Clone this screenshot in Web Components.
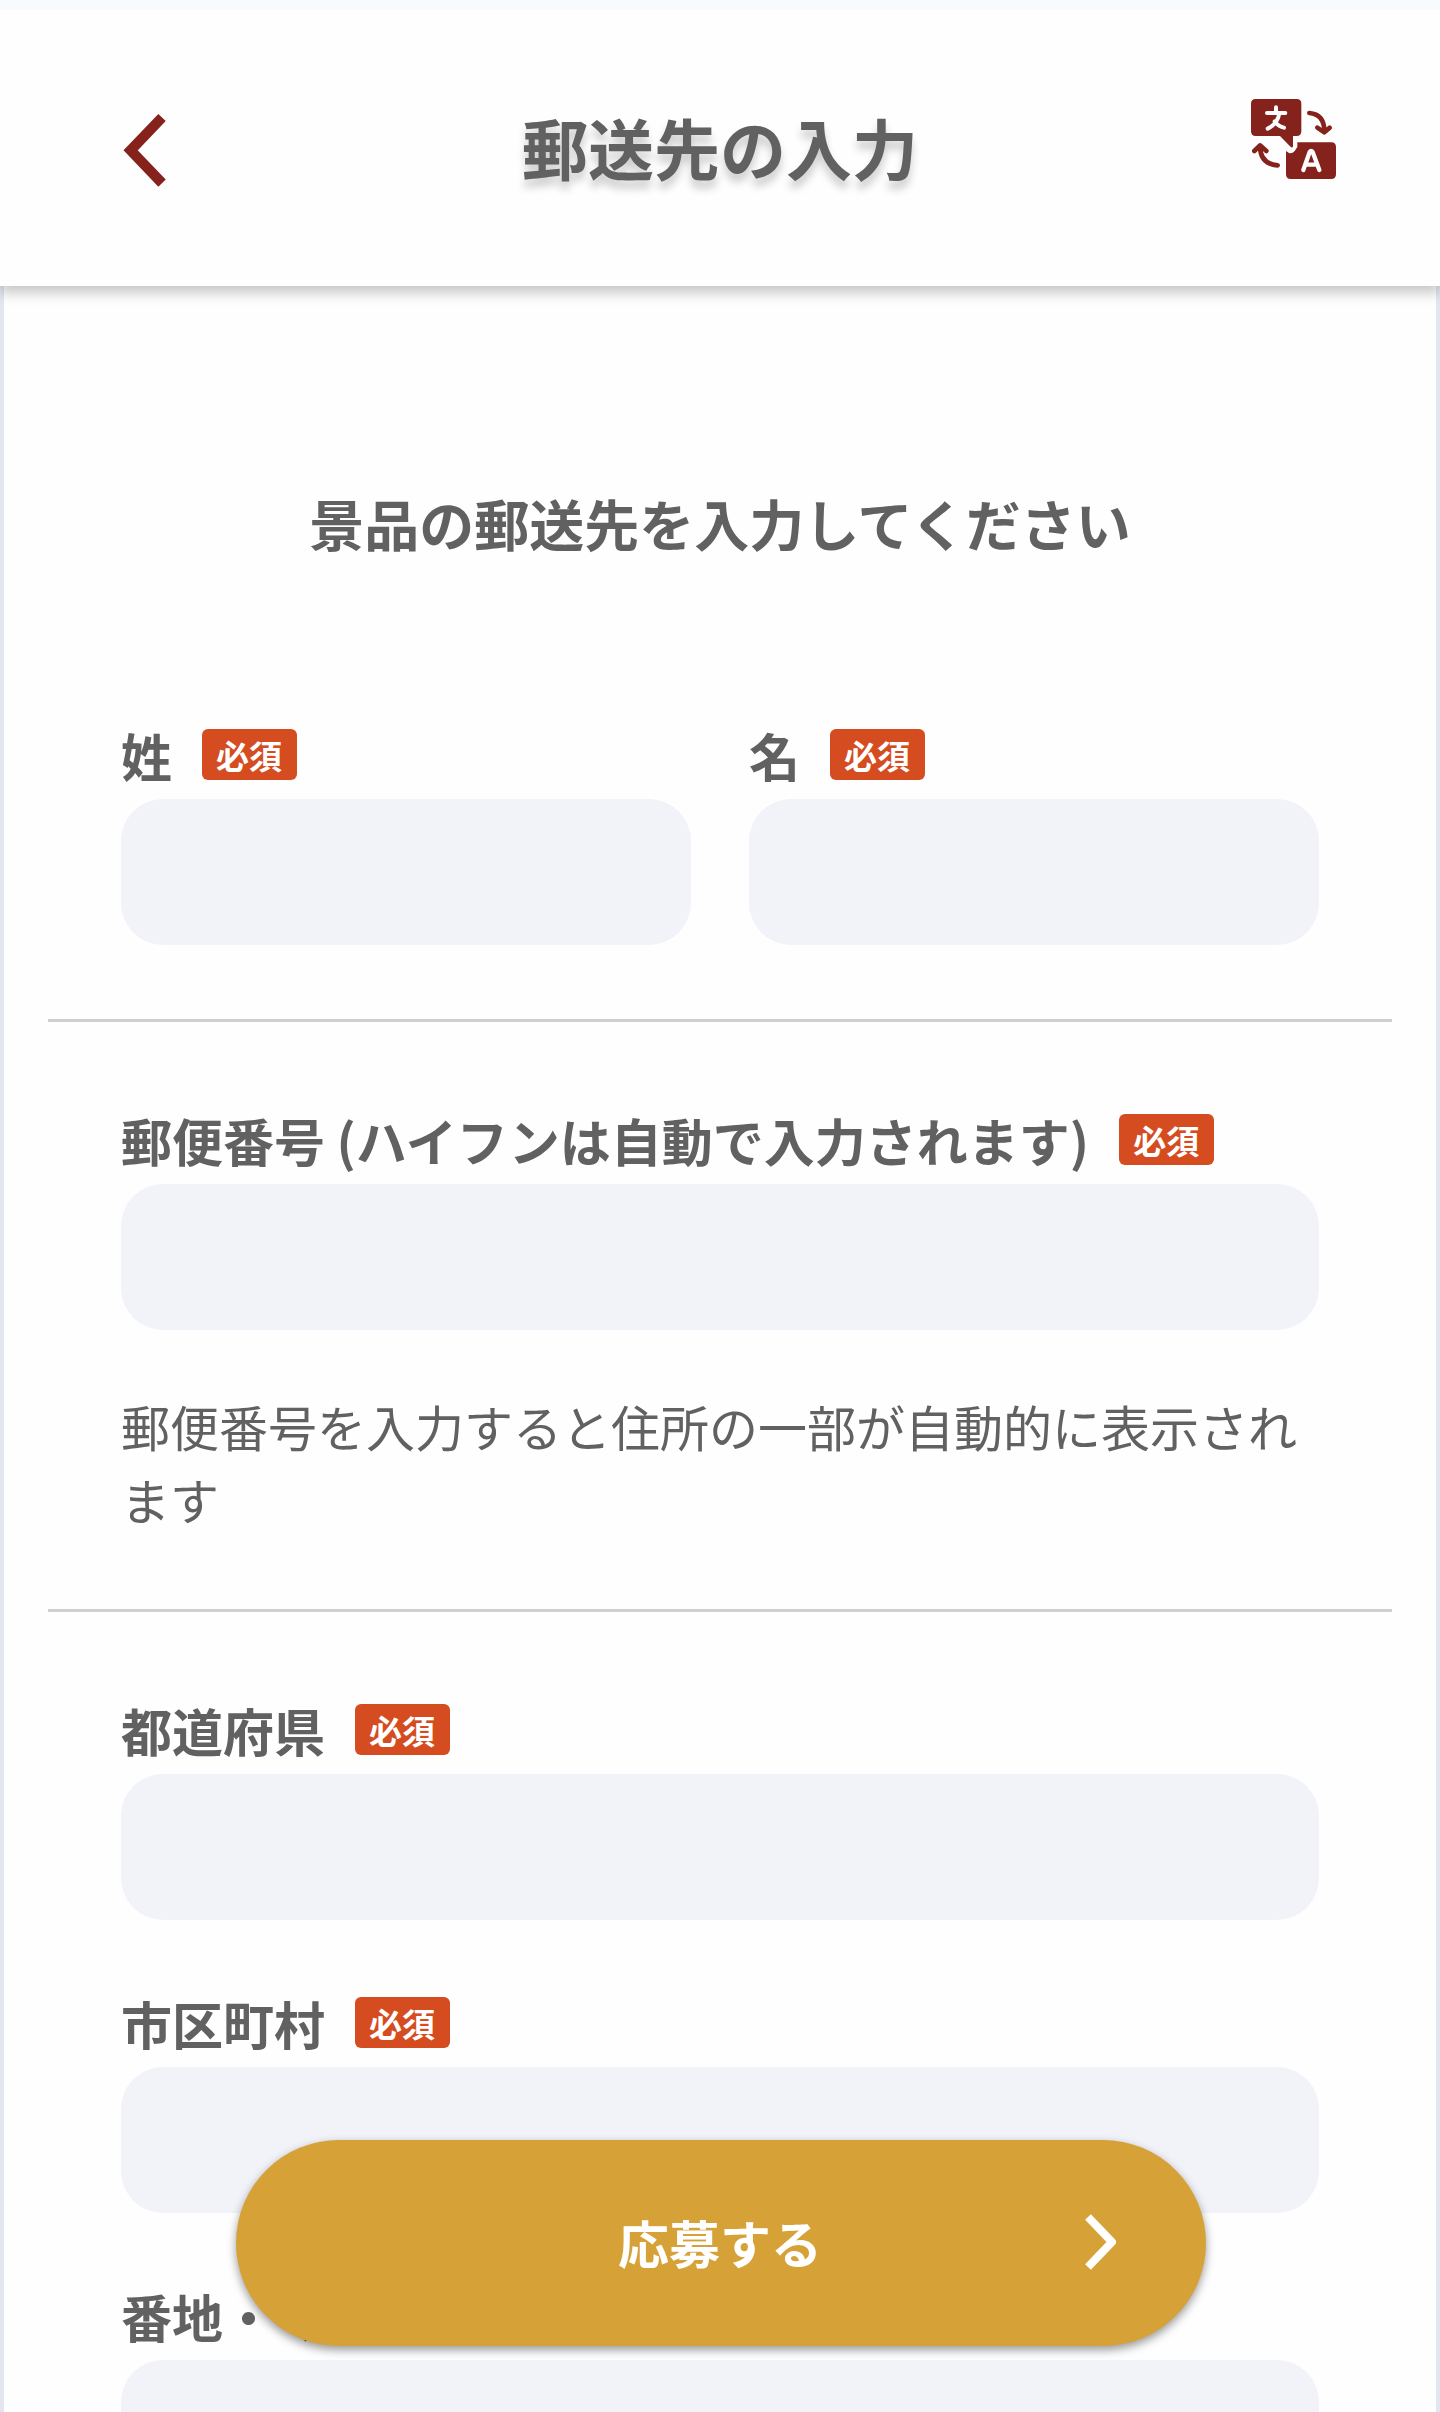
<!DOCTYPE html>
<html lang="ja">
<head>
<meta charset="utf-8">
<meta name="viewport" content="width=device-width, initial-scale=1">
<title>郵送先の入力</title>
<style>
  html, body { margin: 0; height: 100%; }
  body {
    background: #fefefe;
    color: #616161;
    font-family: "Noto Sans CJK JP", "Noto Sans", sans-serif;
  }
</style>
</head>
<body>
<address-page></address-page>

<script>
const define = (name, html, setup) => {
  const template = document.createElement('template');
  template.innerHTML = html;
  customElements.define(name, class extends HTMLElement {
    constructor() {
      super();
      this.attachShadow({ mode: 'open' }).append(template.content.cloneNode(true));
    }
    connectedCallback() { if (setup) setup(this, this.shadowRoot); }
  });
};

define('required-badge', `
  <style>
    :host {
      display: flex; align-items: center; justify-content: center;
      box-sizing: border-box; height: 51px; padding: 2px 15px 0 14px;
      border-radius: 6px; background: #d54c20; color: #fff;
      font-size: 33px; line-height: 49px; font-weight: 700; white-space: nowrap;
    }
  </style>
  <span>必須</span>
`);

define('form-field', `
  <style>
    :host { display: block; min-width: 0; }
    .head { display: flex; align-items: center; gap: 30px; height: 51px; margin-bottom: 19px; }
    label { padding-top: 2px; font-size: 51px; line-height: 51px; font-weight: 700; white-space: nowrap; }
    input {
      display: block; box-sizing: border-box; width: 100%; height: 146px; margin: 0;
      padding: 0 40px; border: 0; border-radius: 42px; background: #f2f3f8;
      color: inherit; font: inherit; font-size: 49px;
    }
  </style>
  <div class="head"><label for="field"><slot></slot></label><required-badge></required-badge></div>
  <input id="field" type="text">
`, (host, root) => {
  root.querySelector('input').name = host.getAttribute('name');
});

define('form-section', `
  <style>
    :host { display: block; padding: 92px 73px 74px; }
    :host([ruled]) { border-bottom: 3px solid #cfcfcf; }
    :host([first]) { padding-top: 0; }
    div { display: flex; flex-direction: column; gap: 77px; }
    :host([columns]) div { display: grid; grid-template-columns: 1fr 1fr; gap: 58px; }
    :host([noted]) div { gap: 59px; }
    ::slotted(p) { margin: 0; font-size: 49px; line-height: 73px; }
  </style>
  <div><slot></slot></div>
`);

define('page-header', `
  <style>
    :host {
      display: grid; grid-template-columns: 1fr auto 1fr; align-items: center;
      box-sizing: border-box; flex: none; height: 286px; padding: 4px 104px 0;
      border-top: 10px solid #f7fbfe; background: #fefefe;
      box-shadow: 0 7px 12px rgba(0, 0, 0, .22); z-index: 1;
    }
    button { padding: 0; border: 0; background: none; color: #85221c; cursor: pointer; }
    svg { display: block; }
    .back { justify-self: start; padding-left: 18px; }
    .language { justify-self: end; padding-bottom: 22px; }
    h1 {
      margin: 0; padding-bottom: 8px; font-size: 66px; line-height: 96px; font-weight: 700;
      text-shadow: 0 8px 8px rgba(0, 0, 0, .2);
    }
  </style>
  <button class="back" type="button" aria-label="戻る">
    <svg width="45" height="74" viewBox="66 70 136 222" fill="none" stroke="currentColor" stroke-width="31">
      <path d="M187 83 92 182 187 281"/>
    </svg>
  </button>
  <h1><slot></slot></h1>
  <button class="language" type="button" aria-label="言語">
    <svg width="85" height="80" viewBox="93 57 255 240" fill="none" stroke-linecap="round" stroke-linejoin="round">
      <path fill="currentColor" d="M107 57H230Q244 57 244 71V154Q244 168 230 168H219V199Q217 206 210 199L180 168H107Q93 168 93 154V71Q93 57 107 57Z"/>
      <path fill="currentColor" d="M232 187H334Q348 187 348 201V283Q348 297 334 297H212Q198 297 198 283V213L207 219Q216 222 224 213L232 201Z"/>
      <g stroke="#fefefe" stroke-width="12">
        <path d="M141 99H196M168 82V99M178 101Q172 132 143 146M164 124Q174 138 192 143"/>
        <path stroke-width="13" d="M250 270 269 216Q273 209 278 216L298 270M259 254H289"/>
      </g>
      <g stroke="currentColor" stroke-width="14">
        <path d="M268 99Q313 103 313 154M292 143 313 157 329 143"/>
        <path d="M173 256Q121 252 120 199M103 213 120 196 139 213"/>
      </g>
    </svg>
  </button>
`);

define('submit-button', `
  <style>
    :host { display: block; }
    button {
      display: grid; grid-template-columns: 1fr auto 1fr; align-items: center;
      box-sizing: border-box; width: 100%; height: 206px; padding: 0 89px 2px 87px;
      border: 0; border-radius: 103px; background: #d6a238; color: #fff;
      font: inherit; font-size: 51px; line-height: 74px; font-weight: 700; cursor: pointer;
      box-shadow: 0 4px 10px rgba(0, 0, 0, .4);
    }
    span { grid-column: 2; }
    svg { display: block; justify-self: end; }
  </style>
  <button type="submit">
    <span><slot></slot></span>
    <svg width="33" height="56" viewBox="0 0 33 56" fill="none" stroke="currentColor" stroke-width="8" stroke-linejoin="round">
      <path d="M4 3 28 28 4 53"/>
    </svg>
  </button>
`);

define('address-page', `
  <style>
    :host { display: flex; flex-direction: column; position: relative; height: 100%; overflow: hidden; }
    main {
      flex: 1; min-height: 0; overflow-y: auto; scrollbar-width: none;
      padding: 0 44px; border: solid #e3e5ef; border-width: 0 4px;
    }
    h2 {
      margin: 0; padding: 196px 0 166px; text-align: center;
      font-size: 55px; line-height: 81px; font-weight: 700;
    }
    submit-button { position: absolute; right: 234px; bottom: 66px; left: 236px; z-index: 2; }
  </style>
  <page-header>郵送先の入力</page-header>
  <main>
    <h2>景品の郵送先を入力してください</h2>
    <form-section first ruled columns>
      <form-field name="family-name">姓</form-field>
      <form-field name="given-name">名</form-field>
    </form-section>
    <form-section ruled noted>
      <form-field name="postal-code">郵便番号 (ハイフンは自動で入力されます)</form-field>
      <p>郵便番号を入力すると住所の一部が自動的に表示されます</p>
    </form-section>
    <form-section>
      <form-field name="prefecture">都道府県</form-field>
      <form-field name="city">市区町村</form-field>
      <form-field name="street">番地・マンション名</form-field>
    </form-section>
  </main>
  <submit-button>応募する</submit-button>
`);
</script>
</body>
</html>
